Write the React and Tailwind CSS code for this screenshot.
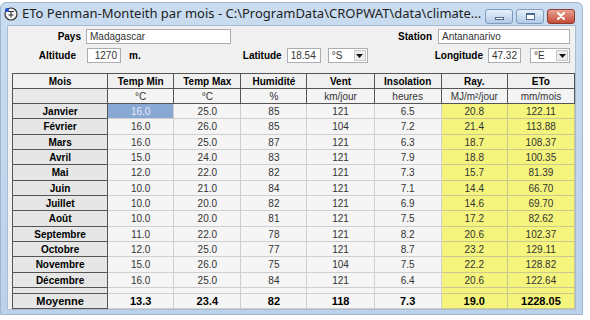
import React from 'react'

const rows = [
  ['Janvier', '16.0', '25.0', '85', '121', '6.5', '20.8', '122.11'],
  ['Février', '16.0', '26.0', '85', '104', '7.2', '21.4', '113.88'],
  ['Mars', '16.0', '25.0', '87', '121', '6.3', '18.7', '108.37'],
  ['Avril', '15.0', '24.0', '83', '121', '7.9', '18.8', '100.35'],
  ['Mai', '12.0', '22.0', '82', '121', '7.3', '15.7', '81.39'],
  ['Juin', '10.0', '21.0', '84', '121', '7.1', '14.4', '66.70'],
  ['Juillet', '10.0', '20.0', '82', '121', '6.9', '14.6', '69.70'],
  ['Août', '10.0', '20.0', '81', '121', '7.5', '17.2', '82.62'],
  ['Septembre', '11.0', '22.0', '78', '121', '8.2', '20.6', '102.37'],
  ['Octobre', '12.0', '25.0', '77', '121', '8.7', '23.2', '129.11'],
  ['Novembre', '15.0', '26.0', '75', '104', '7.5', '22.2', '128.82'],
  ['Décembre', '16.0', '25.0', '84', '121', '6.4', '20.6', '122.64'],
]

const heads = ['Mois', 'Temp Min', 'Temp Max', 'Humidité', 'Vent', 'Insolation', 'Ray.', 'ETo']
const units = ['', '°C', '°C', '%', 'km/jour', 'heures', 'MJ/m²/jour', 'mm/mois']
const widths = ['w-[95px]', 'w-[66px]', 'w-[67px]', 'w-[66px]', 'w-[67px]', 'w-[67px]', 'w-[66px]', 'w-[67px]']

function Edit({ className = '', children }) {
  return (
    <div className={`flex h-[15px] items-center border border-[#abadb3] bg-white px-[3px] text-[10px] text-[#333] ${className}`}>
      {children}
    </div>
  )
}

function Combo({ value, className = '' }) {
  return (
    <div className={`flex h-[15px] w-[40px] items-center border border-[#abadb3] bg-white text-[10px] text-[#333] ${className}`}>
      <span className="flex-1 pl-[3px]">{value}</span>
      <span className="mr-px flex h-[11px] w-[12px] items-center justify-center border border-[#c8c8c8] bg-[#ececec]">
        <svg width="7" height="4" viewBox="0 0 7 4"><path d="M0 0h7L3.5 4z" fill="#111" /></svg>
      </span>
    </div>
  )
}

function CaptionButton({ kind }) {
  if (kind === 'close') {
    return (
      <div className="flex h-[15px] w-[28px] items-center justify-center rounded-[3px] border border-[#8a3a30] bg-gradient-to-b from-[#e8a293] to-[#c44a37]">
        <svg width="10" height="8" viewBox="0 0 10 8">
          <path d="M2 1l6 6M8 1L2 7" stroke="#fff" strokeWidth="2" strokeLinecap="round" />
        </svg>
      </div>
    )
  }
  return (
    <div className="flex h-[15px] w-[28px] items-center justify-center rounded-[3px] border border-[#7d9cc0] bg-gradient-to-b from-[#e6f0fa] to-[#b3cbe6]">
      {kind === 'min' ? (
        <div className="mt-[4px] h-[3px] w-[9px] border border-[#4d6a8c] bg-white" />
      ) : (
        <div className="h-[7px] w-[9px] border border-[#4d6a8c] border-t-2 bg-white" />
      )}
    </div>
  )
}

export default function App() {
  return (
    <div className="h-[320px] w-[590px] overflow-hidden bg-white font-['Liberation_Sans',Arial,sans-serif]">
      <div className="mt-[2px] flex h-[313px] w-[583px] flex-col rounded-t-[6px] border border-[#9fb6d0] bg-gradient-to-b from-[#c9dcf0] to-[#bcd2ea] px-[6px] pb-[5px]">
        {/* title bar */}
        <div className="flex h-[22px] shrink-0 items-center">
          <svg width="14" height="14" viewBox="0 0 14 14" className="-ml-[3px] mr-[4px]">
            <circle cx="7" cy="7" r="6" fill="#f4f4f4" stroke="#333" strokeWidth="1.2" />
            <path d="M4 4.5h6M7 4.5v6M4.5 8h5" stroke="#333" strokeWidth="1.1" fill="none" />
            <circle cx="3" cy="3" r="2" fill="#1f4fd0" />
          </svg>
          <span className="flex-1 truncate font-['Noto_Sans',sans-serif] text-[13px] text-[#1e1e1e]">
            ETo Penman-Monteith par mois - C:\ProgramData\CROPWAT\data\climate...
          </span>
          <div className="mt-[4px] mr-[1px] flex gap-[3px]">
            <CaptionButton kind="min" />
            <CaptionButton kind="max" />
            <CaptionButton kind="close" />
          </div>
        </div>

        {/* client area */}
        <div className="flex flex-1 flex-col border border-[#a9bcd2] bg-[#f0f0f0] text-[10px]">
          <div className="mt-[3px] flex items-center">
            <span className="w-[73px] text-right font-bold">Pays</span>
            <Edit className="ml-[5px] w-[145px]">Madagascar</Edit>
            <span className="ml-auto font-bold">Station</span>
            <Edit className="ml-[6px] mr-[5px] w-[132px]">Antananarivo</Edit>
          </div>
          <div className="mt-[4px] flex items-center">
            <span className="w-[68px] text-right font-bold">Altitude</span>
            <Edit className="ml-[11px] w-[34px] justify-end">1270</Edit>
            <span className="ml-[8px] font-bold">m.</span>
            <span className="ml-auto font-bold">Latitude</span>
            <Edit className="ml-[5px] w-[34px]">18.54</Edit>
            <Combo value="°S" className="ml-[7px]" />
            <span className="ml-[67px] font-bold">Longitude</span>
            <Edit className="ml-[5px] w-[33px] justify-end">47.32</Edit>
            <Combo value="°E" className="ml-[9px] mr-[5px]" />
          </div>

          <table className="mt-[10px] ml-[4px] table-fixed border-collapse border border-[#555] leading-[11px]">
            <colgroup>
              {widths.map((w, i) => (
                <col key={i} className={w} />
              ))}
            </colgroup>
            <thead>
              <tr className="h-[15px]">
                {heads.map((h) => (
                  <th key={h} className="border border-[#555] bg-[#f0f0f0] p-0 text-center font-bold text-black">
                    {h}
                  </th>
                ))}
              </tr>
              <tr className="h-[15px]">
                {units.map((u, i) => (
                  <td
                    key={i}
                    className={`border border-x-[#555] border-b-[#555] border-t-[#bbb] p-0 text-center text-[#333] ${i === 0 ? 'bg-[#e9e9e9]' : 'bg-[#f4f4f4]'}`}
                  >
                    {u}
                  </td>
                ))}
              </tr>
            </thead>
            <tbody>
              {rows.map((r, ri) => (
                <tr key={r[0]} className={ri % 3 === 1 ? 'h-[16px]' : 'h-[15px]'}>
                  {r.map((v, ci) => {
                    if (ci === 0) {
                      return (
                        <td key={ci} className="border border-[#555] bg-[#e6e6e6] p-0 text-center font-bold text-black">
                          {v}
                        </td>
                      )
                    }
                    const sel = ri === 0 && ci === 1
                    const yellow = ci >= 6
                    return (
                      <td
                        key={ci}
                        className={`border p-0 text-center ${
                          sel
                            ? 'border-[#cfcfcf] bg-[#8aa8d4] text-[#e4ecf6]'
                            : yellow
                              ? 'border-[#c9c98f] bg-[#f5f57e] text-[#333]'
                              : 'border-[#cfcfcf] bg-[#f5f5f5] text-[#333]'
                        }`}
                      >
                        {v}
                      </td>
                    )
                  })}
                </tr>
              ))}
              <tr className="h-[6px]">
                {heads.map((h, i) => (
                  <td
                    key={h}
                    className={`border p-0 ${i === 0 ? 'border-[#555] bg-[#e6e6e6]' : i >= 6 ? 'border-[#c9c98f] bg-[#f5f57e]' : 'border-[#cfcfcf] bg-[#f5f5f5]'}`}
                  />
                ))}
              </tr>
              <tr className="h-[15px]">
                {['Moyenne', '13.3', '23.4', '82', '118', '7.3', '19.0', '1228.05'].map((v, i) => (
                  <td
                    key={i}
                    className={`border border-t-[#555] p-0 text-center text-[11px] font-bold text-black ${
                      i === 0 ? 'border-[#555] bg-[#e6e6e6] text-[10px]' : i >= 6 ? 'border-[#c9c98f] bg-[#f5f57e]' : 'border-[#cfcfcf] bg-[#f5f5f5]'
                    }`}
                  >
                    {v}
                  </td>
                ))}
              </tr>
            </tbody>
          </table>
        </div>
      </div>
    </div>
  )
}
